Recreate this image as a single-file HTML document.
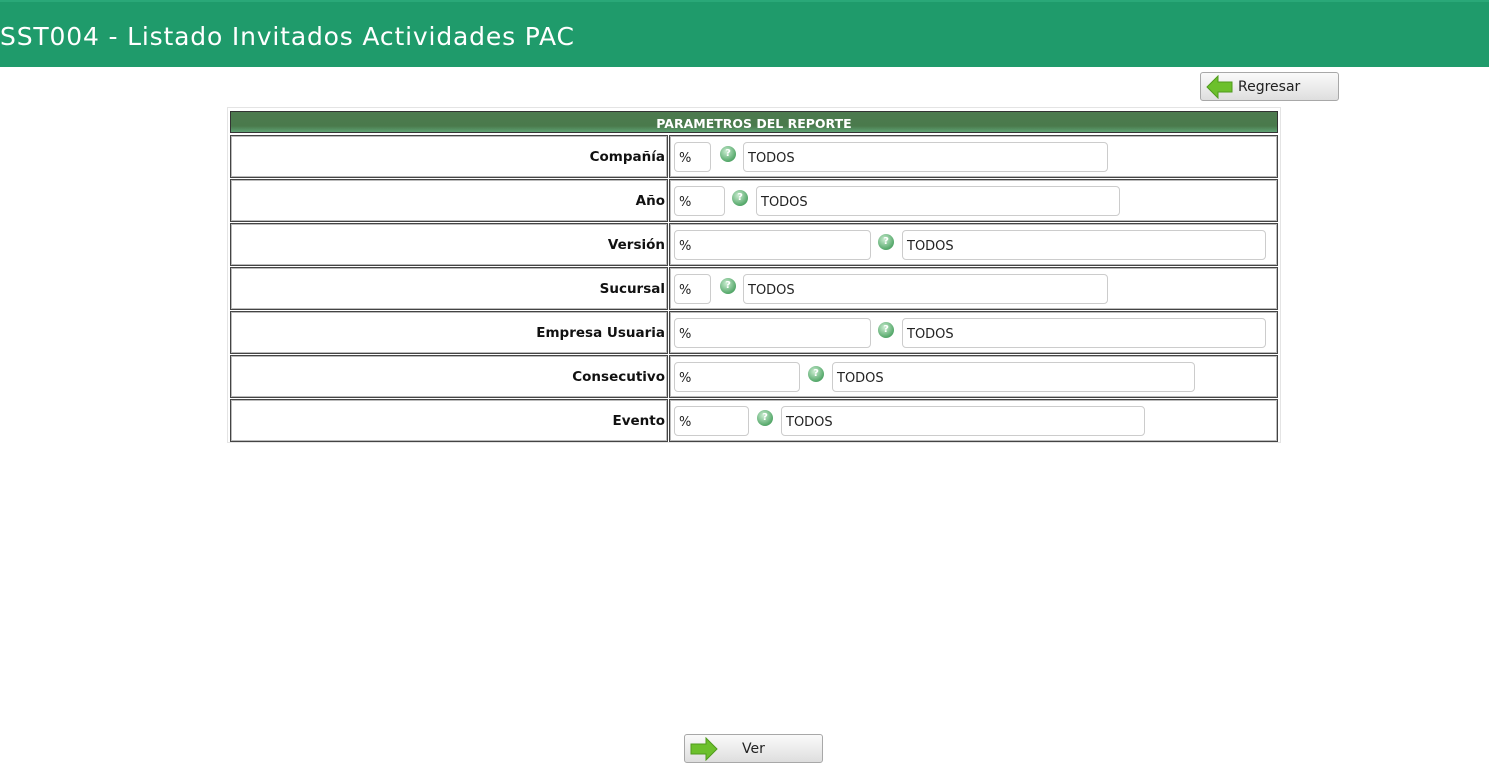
<!DOCTYPE html>
<html><head><meta charset="utf-8"><style>
body{margin:0;width:1489px;height:772px;background:#fff;position:relative;overflow:hidden;font-family:"DejaVu Sans","Liberation Sans",sans-serif;}
.top{position:absolute;left:0;top:0;width:1489px;height:67px;background:#1f9b6b;border-top:2px solid #2aa878;box-sizing:border-box}
.btn{position:absolute;width:139px;height:29px;border:1px solid #a8a8a8;border-radius:3px;background:linear-gradient(#fafafa,#dedede);box-sizing:border-box;font-size:14px;color:#222}
.outer{position:absolute;left:227px;top:107px;width:1054px;height:336px;border:1px solid #e4e4e4;box-sizing:border-box}
.hdr{position:absolute;left:230px;top:111px;width:1048px;height:22px;background:linear-gradient(#4d7a4f,#4a7a4c 70%,#5fa274);border:1px solid #333;box-sizing:border-box;color:#fff;font-weight:bold;font-size:12.5px;text-align:center;line-height:23px}
.cell{position:absolute;height:43px;border:1px solid #444;box-shadow:inset 0 0 0 1px #bbb;box-sizing:border-box}
.lab{font-weight:bold;font-size:13.5px;text-align:right;line-height:43px;padding-right:2px;color:#111}
.in{position:absolute;height:30px;border:1px solid #ccc;border-radius:4px;box-sizing:border-box;font-size:13px;line-height:31px;padding-left:4px;color:#222;background:#fff}
.q{position:absolute;width:16px;height:16px;border-radius:50%;background:radial-gradient(circle at 40% 35%,#c9ecd0,#55a86a 70%,#3d8b52);color:#fff;font-size:10px;font-weight:bold;text-align:center;line-height:16px}
</style></head><body>
<div class="top"><svg width="600" height="65" style="position:absolute;left:0;top:0"><text x="0" y="43" fill="#fff" font-family="DejaVu Sans, sans-serif" font-size="25" textLength="574">SST004 - Listado Invitados Actividades PAC</text></svg></div>
<div class="btn" style="left:1200px;top:72px"><svg width="28" height="24" style="position:absolute;left:5px;top:2px"><path d="M1 12 L12 1 L12 7 L26 7 L26 17 L12 17 L12 23 Z" fill="#6cc02c" stroke="#4f9a1c" stroke-width="1"/></svg><span style="position:absolute;left:37px;top:6px">Regresar</span></div>
<div class="outer"></div>
<div class="hdr">PARAMETROS DEL REPORTE</div>
<div id="rows"></div>
<script>
var rows=[["Compañía",37,728,743,1108],["Año",51,740,756,1120],["Versión",197,886,902,1266],["Sucursal",37,728,743,1108],["Empresa Usuaria",197,886,902,1266],["Consecutivo",126,816,832,1195],["Evento",75,765,781,1145]];
var h="";
rows.forEach(function(r,i){var y=135+i*44;
h+='<div class="cell lab" style="left:230px;top:'+y+'px;width:438px">'+r[0]+'</div>';
h+='<div class="cell" style="left:669px;top:'+y+'px;width:609px"></div>';
h+='<div class="in" style="left:674px;top:'+(y+7)+'px;width:'+r[1]+'px">%</div>';
h+='<div class="q" style="left:'+(r[2]-8)+'px;top:'+(y+11)+'px">?</div>';
h+='<div class="in" style="left:'+r[3]+'px;top:'+(y+7)+'px;width:'+(r[4]-r[3])+'px">TODOS</div>';});
document.getElementById("rows").innerHTML=h;
</script>
<div class="btn" style="left:684px;top:734px"><svg width="30" height="24" style="position:absolute;left:4px;top:2px"><path d="M28 12 L17 1 L17 7 L2 7 L2 17 L17 17 L17 23 Z" fill="#6cc02c" stroke="#4f9a1c" stroke-width="1"/></svg><span style="position:absolute;left:57px;top:6px">Ver</span></div>
</body></html>
